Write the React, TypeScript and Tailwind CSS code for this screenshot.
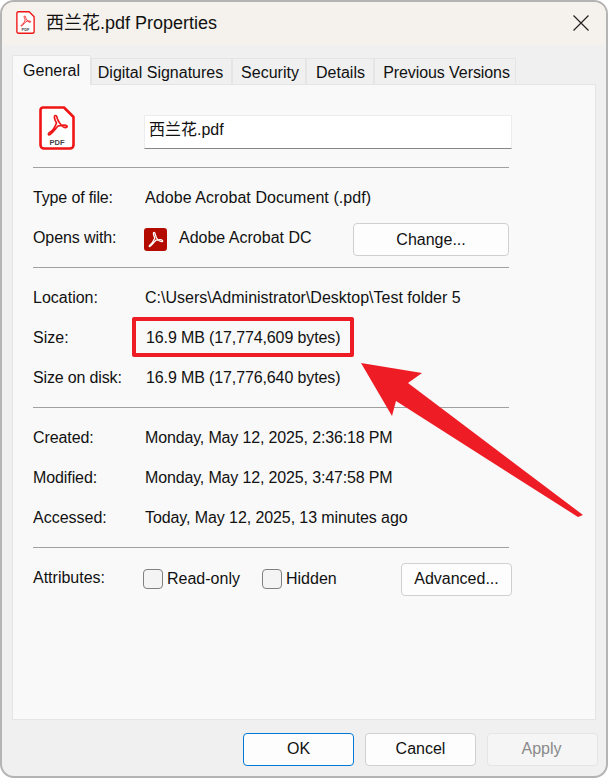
const sans = "font-['Liberation_Sans','Noto_Sans_CJK_SC',sans-serif]";

function PdfIcon({ className }: { className: string }) {
  return (
    <svg viewBox="0 0 36 44" className={className} fill="none">
      <path d="M4 1.500H25L34.500 11V39A3.500 3.500 0 0 1 31 42.500H5A3.500 3.500 0 0 1 1.500 39V4A2.500 2.500 0 0 1 4 1.500Z" fill="#fff" stroke="#f01414" strokeWidth="2.6" strokeLinejoin="round" />
      <path d="M16.500 9.500C14.800 9.500 15 12.500 17.500 17C16 21 13.500 25 10.500 26.500C8.500 28 9.500 29.500 11 28.500C14 26.500 17 22 19 20C23 19 27 18.800 28 20C28.800 21.500 26.500 22 24.500 21C22 19.500 19 15 18.300 12.500C18 10.500 17.800 9.500 16.500 9.500Z" stroke="#f01414" strokeWidth="1.700" strokeLinejoin="round" />
      <text x="18" y="38.500" textAnchor="middle" fontSize="7.500" fontWeight="700" fill="#444" fontFamily="Liberation Sans">PDF</text>
    </svg>
  );
}

function Row({ label, value, labelClass = "", valueClass = "" }: { label: string; value: string; labelClass?: string; valueClass?: string }) {
  return (
    <div className="flex h-10 items-center pt-[2px]">
      <div className={`w-[112px] ${labelClass}`}>{label}</div>
      <div className={valueClass}>{value}</div>
    </div>
  );
}

function Rule() {
  return <div className="my-[9.5px] h-px w-[476px] bg-[#a0a0a0]" />;
}

function Tab({ label, width, active }: { label: string; width: string; active?: boolean }) {
  return active ? (
    <div className={`z-10 mb-[-1px] flex h-[30px] items-start justify-center rounded-t-[2px] border border-b-0 border-[#e5e5e5] bg-[#f9f9f9] pt-[5px] ${width}`}>{label}</div>
  ) : (
    <div className={`flex h-[26px] items-center justify-center border border-b-0 border-[#e5e5e5] bg-[#f0f0f0] pt-[2px] ${width}`}>{label}</div>
  );
}

export default function App() {
  return (
    <div className={`${sans} relative h-[778px] w-[608px] overflow-hidden bg-white text-[16px] leading-5 text-[#111]`}>
      <div className="flex h-full flex-col overflow-hidden rounded-[14px] border-2 border-[#b4b4b4] bg-[#f0f0f0]">
        <div className="flex h-[43px] shrink-0 items-center bg-[#f5f1ec] pb-[2px] pl-[14px] pr-[17px]">
          <PdfIcon className="h-[23px] w-[19px]" />
          <div className="ml-[11px] text-[18px]">西兰花.pdf Properties</div>
          <svg viewBox="0 0 16 16" className="ml-auto h-4 w-4" stroke="#222" strokeWidth="1.200" fill="none">
            <path d="M0.500 0.500L15.500 15.500M15.500 0.500L0.500 15.500" />
          </svg>
        </div>
        <div className="ml-[10px] mt-[10px] flex h-[29px] items-end">
          <Tab label="General" width="w-[79px]" active />
          <Tab label="Digital Signatures" width="w-[141px] pr-[2px]" />
          <Tab label="Security" width="w-[74px] pl-[2px]" />
          <Tab label="Details" width="w-[68px] pl-[1px]" />
          <Tab label="Previous Versions" width="w-[142px] pl-[3px] tracking-[-0.08px]" />
        </div>
        <div className="ml-[10px] h-[636px] w-[584px] border border-[#e5e5e5] bg-[#f9f9f9] pl-[20px]">
          <div className="flex h-[72px] items-start">
            <PdfIcon className="ml-[6px] mt-[21px] h-[44px] w-[36px]" />
            <div className="ml-[69px] mt-[30px] flex h-[34px] w-[368px] items-center border border-[#ececec] border-b-[#868686] bg-white pb-[4px] pl-[4px]">西兰花.pdf</div>
          </div>
          <Rule />
          <Row label="Type of file:" value="Adobe Acrobat Document (.pdf)" labelClass="tracking-[-0.15px]" valueClass="tracking-[0.07px]" />
          <div className="flex h-10 items-center pt-[2px]">
            <div className="w-[111px] tracking-[-0.1px]">Opens with:</div>
            <div className="mt-[2px] flex h-[23px] w-[23px] items-center justify-center rounded-[3px] bg-[#b30b00]">
              <svg viewBox="0 0 24 24" className="h-[17px] w-[17px]" fill="none" stroke="#fff" strokeWidth="1.800" strokeLinejoin="round">
                <path d="M10 2C8.500 2 8.800 5 11 10C9.500 14 7 18 4 20C2.500 21.500 3 22.500 4.500 21.500C7.500 19.500 10.500 15 12.500 13C16.500 12 21 12 22 13.500C22.800 15 20.500 15.500 18.500 14.500C15.500 13 12.500 8 11.800 5C11.500 3 11.300 2 10 2Z" />
              </svg>
            </div>
            <div className="ml-[12px]">Adobe Acrobat DC</div>
            <button className="ml-[41px] mt-[3px] h-[33px] w-[156px] rounded-[4px] border border-[#d0d0d0] bg-[#fdfdfd] pl-[1px]">Change...</button>
          </div>
          <Rule />
          <Row label="Location:" value="C:\Users\Administrator\Desktop\Test folder 5" />
          <Row label="Size:" value="16.9 MB (17,774,609 bytes)" valueClass="pl-px tracking-[-0.12px]" />
          <Row label="Size on disk:" value="16.9 MB (17,776,640 bytes)" labelClass="tracking-[-0.15px]" valueClass="pl-px tracking-[-0.12px]" />
          <Rule />
          <Row label="Created:" value="Monday, May 12, 2025, 2:36:18 PM" labelClass="tracking-[-0.1px]" valueClass="tracking-[-0.15px]" />
          <Row label="Modified:" value="Monday, May 12, 2025, 3:47:58 PM" labelClass="tracking-[-0.1px]" valueClass="tracking-[-0.15px]" />
          <Row label="Accessed:" value="Today, May 12, 2025, 13 minutes ago" valueClass="tracking-[-0.09px]" />
          <Rule />
          <div className="flex h-10 items-center pt-[4px]">
            <div className="w-[110px] pb-[3px]">Attributes:</div>
            <div className="h-[20px] w-[20px] rounded-[4px] border border-[#808080] bg-[#f4f4f4]" />
            <div className="ml-[4px] w-[74px]">Read-only</div>
            <div className="ml-[21px] h-[20px] w-[20px] rounded-[4px] border border-[#808080] bg-[#f4f4f4]" />
            <div className="ml-[4px] w-[115px]">Hidden</div>
            <button className="h-[33px] w-[111px] rounded-[4px] border border-[#d0d0d0] bg-[#fdfdfd]">Advanced...</button>
          </div>
        </div>
        <div className="mt-[13px] flex gap-[11px] pl-[241px]">
          <button className="h-[33px] w-[111px] rounded-[4px] border border-[#0078d4] bg-[#fdfdfd] pb-[1px]">OK</button>
          <button className="h-[33px] w-[111px] rounded-[4px] border border-[#d0d0d0] bg-[#fdfdfd] pb-[1px]">Cancel</button>
          <button className="h-[33px] w-[111px] rounded-[4px] border border-[#e5e5e5] bg-[#f5f5f5] pb-[1px] pr-[2px] text-[#8a8a8a]">Apply</button>
        </div>
      </div>
      <div className="absolute left-[132px] top-[317px] h-[40px] w-[222px] rounded-[2px] border-4 border-[#ee1c25]" />
      <svg viewBox="0 0 608 778" className="pointer-events-none absolute left-0 top-0 h-[778px] w-[608px]">
        <path d="M361 363L422 373L408 383L583 515L578 517L396 401L392 416Z" fill="#ee1c25" />
      </svg>
    </div>
  );
}
